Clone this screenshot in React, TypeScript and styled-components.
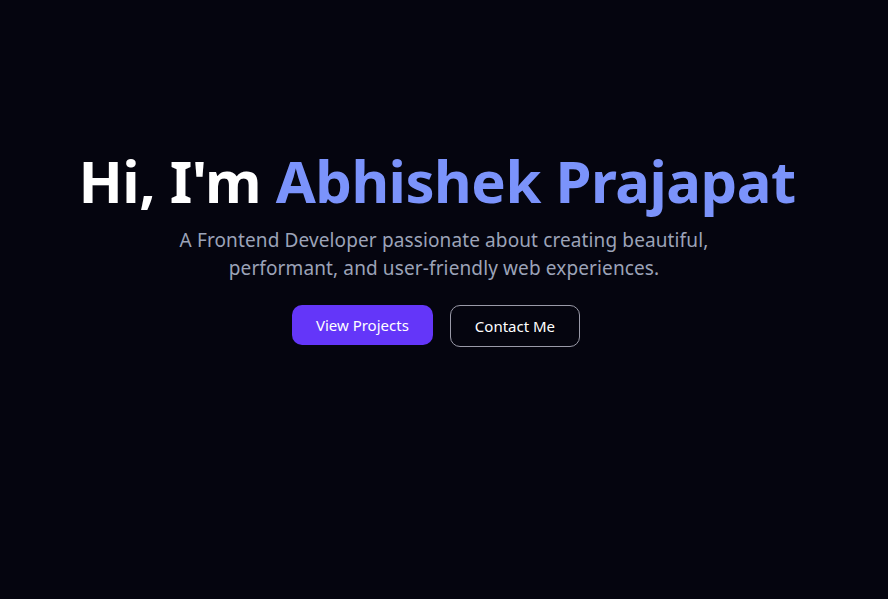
import React from 'react';
import styled, { createGlobalStyle } from 'styled-components';

const GlobalStyle = createGlobalStyle`
  html, body {
    margin: 0;
    padding: 0;
    background: #05050f;
  }
  * { box-sizing: border-box; }
`;

const Hero = styled.section`
  min-height: 599px;
  display: flex;
  flex-direction: column;
  align-items: center;
  padding-top: 143px;
  font-family: "Noto Sans", "Open Sans", sans-serif;
  background: #05050f;
`;

const Title = styled.h1`
  margin: 0;
  padding-right: 14px;
  font-size: 58px;
  line-height: 76px;
  font-weight: 700;
  color: #ffffff;
  text-align: center;
  letter-spacing: -0.5px;
`;

const Name = styled.span`
  color: #7b93fb;
`;

const Subtitle = styled.p`
  margin: 7px 0 0;
  max-width: 570px;
  font-size: 19px;
  line-height: 28px;
  letter-spacing: 0.12px;
  color: #9ca3b8;
  text-align: center;
`;

const Actions = styled.div`
  display: flex;
  gap: 17px;
  margin-top: 23px;
  padding-right: 16px;
`;

const Button = styled.button<{ $variant?: 'primary' | 'outline' }>`
  font-family: inherit;
  font-size: 15px;
  color: #ffffff;
  height: ${p => (p.$variant === 'primary' ? '40px' : '42px')};
  padding: 0 24px;
  border-radius: 10px;
  cursor: pointer;
  background: ${p => (p.$variant === 'primary' ? '#6436f9' : 'transparent')};
  border: ${p => (p.$variant === 'primary' ? 'none' : '1px solid #9a9aa8')};
`;

export default function App() {
  return (
    <>
      <GlobalStyle />
      <Hero>
        <Title>
          Hi, I'm <Name>Abhishek Prajapat</Name>
        </Title>
        <Subtitle>
          A Frontend Developer passionate about creating beautiful, performant, and user-friendly web experiences.
        </Subtitle>
        <Actions>
          <Button $variant="primary">View Projects</Button>
          <Button $variant="outline">Contact Me</Button>
        </Actions>
      </Hero>
    </>
  );
}
